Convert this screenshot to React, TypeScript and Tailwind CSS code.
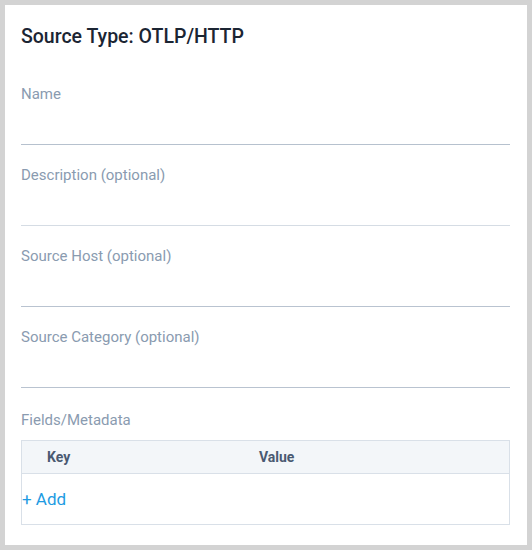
import React from "react";

const fields = [
  { label: "Name", line: "border-[#b6c1ce]" },
  { label: "Description (optional)", line: "border-[#d5dce4]" },
  { label: "Source Host (optional)", line: "border-[#b9c3d0]" },
  { label: "Source Category (optional)", line: "border-[#b9c3d0]" },
];

export default function App() {
  return (
    <div
      className="w-[532px] h-[550px] bg-[#d3d3d3] p-[5px]"
      style={{ fontFamily: "Roboto, 'Noto Sans', sans-serif" }}
    >
      <div className="h-[540px] w-[522px] bg-white pl-4 pr-[17px]">
        <div className="pt-[20px] h-[79px]">
          <h1 className="text-[19.5px] leading-[24px] font-medium text-[#1b2533]">
            Source Type: OTLP/HTTP
          </h1>
        </div>
        {fields.map((f, i) => (
          <div key={f.label} className={i === 0 ? "" : "mt-5"}>
            <div className="text-[15px] leading-[20px] text-[#8a9bb0]">{f.label}</div>
            <div className={`h-[41px] border-b ${f.line}`}></div>
          </div>
        ))}
        <div className="mt-[22px] text-[15px] leading-[20px] text-[#8a9bb0]">Fields/Metadata</div>
        <div className="mt-[10px] border border-[#d9e0e8]">
          <div className="flex h-[33px] items-center bg-[#f3f6f9] border-b border-[#d9e0e8] text-[14px] font-bold text-[#4a5a72]">
            <div className="pl-[25px] w-[237px]">Key</div>
            <div>Value</div>
          </div>
          <div className="h-[50px] flex items-center">
            <span className="text-[17px] text-[#1e9be2] leading-[20px]">+ Add</span>
          </div>
        </div>
      </div>
    </div>
  );
}
